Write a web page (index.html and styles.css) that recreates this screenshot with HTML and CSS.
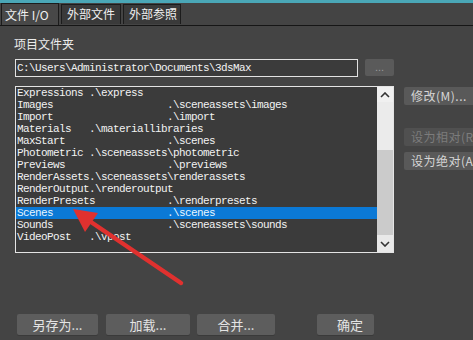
FILE: index.html
```html
<!DOCTYPE html>
<html>
<head>
<meta charset="utf-8">
<link rel="stylesheet" href="styles.css">
</head>
<body>
<div class="page">
  <div class="topstrip"></div>
  <div class="tabs">
    <div class="tab active">文件 I/O</div>
    <div class="tab">外部文件</div>
    <div class="tab">外部参照</div>
  </div>
  <div class="content">
    <div class="label">项目文件夹</div>
    <div class="pathrow">
      <div class="pathbox">C:\Users\Administrator\Documents\3dsMax</div>
      <div class="browse">...</div>
    </div>
    <div class="mainrow">
      <div class="listbox">
        <div class="rows">
<div class="row">Expressions .\express</div>
<div class="row">Images                   .\sceneassets\images</div>
<div class="row">Import                   .\import</div>
<div class="row">Materials   .\materiallibraries</div>
<div class="row">MaxStart                 .\scenes</div>
<div class="row">Photometric .\sceneassets\photometric</div>
<div class="row">Previews                 .\previews</div>
<div class="row">RenderAssets.\sceneassets\renderassets</div>
<div class="row">RenderOutput.\renderoutput</div>
<div class="row">RenderPresets            .\renderpresets</div>
<div class="row selected">Scenes                   .\scenes</div>
<div class="row">Sounds                   .\sceneassets\sounds</div>
<div class="row">VideoPost   .\vpost</div>
        </div>
        <div class="scrollbar">
          <div class="sbtn">
            <svg width="10" height="6" viewBox="0 0 10 6"><path d="M1 5 L5 1 L9 5" fill="none" stroke="#333" stroke-width="1.6"/></svg>
          </div>
          <div class="track"></div>
          <div class="thumb"></div>
          <div class="sbtn down">
            <svg width="10" height="6" viewBox="0 0 10 6"><path d="M1 1 L5 5 L9 1" fill="none" stroke="#333" stroke-width="1.6"/></svg>
          </div>
        </div>
      </div>
      <div class="sidebtns">
        <div class="sbutton">修改(M)...</div>
        <div class="sbutton disabled">设为相对(R)</div>
        <div class="sbutton">设为绝对(A)</div>
      </div>
    </div>
    <div class="bottomrow">
      <div class="btn b1">另存为...</div>
      <div class="btn b2">加载...</div>
      <div class="btn b3">合并...</div>
      <div class="btn b4">确定</div>
    </div>
  </div>
  <svg class="arrow" width="473" height="340" viewBox="0 0 473 340">
    <line x1="181" y1="283" x2="88" y2="220" stroke="#e0312f" stroke-width="4.5" stroke-linecap="round"/>
    <polygon points="73,209 98,213 85,232" fill="#e0312f"/>
  </svg>
</div>
</body>
</html>
```
FILE: styles.css
```css
html, body {
  margin: 0;
  padding: 0;
  background: #444444;
}
.page {
  position: relative;
  width: 473px;
  height: 340px;
  overflow: hidden;
  background: #444444;
  font-family: "Noto Sans CJK SC", "Liberation Sans", sans-serif;
  color: #ececec;
}
.topstrip {
  height: 3px;
  background: #4aa7b7;
}
.tabs {
  display: flex;
  gap: 2px;
  height: 22px;
  padding-left: 1px;
  border-bottom: 1px solid #161616;
  box-sizing: content-box;
}
.tab {
  box-sizing: border-box;
  flex-shrink: 0;
  height: 20px;
  margin-top: 1px;
  padding: 0 0 0 5px;
  font-size: 12px;
  line-height: 18px;
  background: #3a3a3a;
  border: 1px solid #1c1c1c;
  border-bottom: none;
  color: #f0f0f0;
  white-space: nowrap;
}
.tab.active {
  height: 22px;
  margin-top: 0;
  background: #484848;
  line-height: 21px;
  width: 58px;
  padding-left: 3px;
}
.tab:nth-child(2) { width: 60px; }
.tab:nth-child(3) { width: 58px; }
.content {
  padding-left: 15px;
}
.label {
  margin-top: 10px;
  margin-left: -1px;
  font-size: 12px;
  line-height: 16px;
  color: #ececec;
}
.pathrow {
  display: flex;
  align-items: flex-start;
  gap: 7px;
  margin-top: 7px;
}
.pathbox {
  box-sizing: border-box;
  flex-shrink: 0;
  width: 343px;
  height: 18px;
  border: 1px solid #e2e2e2;
  background: #3b3b3b;
  font-family: "Liberation Mono", monospace;
  font-size: 11px;
  letter-spacing: -0.6px;
  line-height: 16px;
  padding-left: 1px;
  color: #f2f2f2;
  white-space: pre;
}
.browse {
  box-sizing: border-box;
  flex-shrink: 0;
  width: 29px;
  height: 17px;
  background: #5a5a5a;
  border-radius: 2px;
  font-family: "Liberation Sans", sans-serif;
  font-size: 11px;
  line-height: 16px;
  text-align: center;
  color: #9a9a9a;
}
.mainrow {
  display: flex;
  align-items: flex-start;
  gap: 10px;
  margin-top: 9px;
}
.listbox {
  box-sizing: border-box;
  flex-shrink: 0;
  width: 379px;
  height: 167px;
  border: 1px solid #e4e4e4;
  background: #3b3b3b;
  display: flex;
}
.rows {
  flex: 1;
  padding-left: 1px;
  font-family: "Liberation Mono", monospace;
  font-size: 11px;
  letter-spacing: -0.6px;
  color: #f2f2f2;
}
.row {
  height: 12px;
  line-height: 12px;
  white-space: pre;
}
.row.selected {
  background: #0b79d6;
  margin-left: -1px;
  padding-left: 1px;
  color: #e8f6ff;
}
.scrollbar {
  width: 16px;
  flex-shrink: 0;
  display: flex;
  flex-direction: column;
  background: #ececec;
}
.sbtn {
  height: 15px;
  display: flex;
  align-items: center;
  justify-content: center;
  background: #f0f0f0;
}
.sbtn.down {
  height: 17px;
  background: #e9e9e9;
}
.track {
  height: 48px;
  background: #ebebeb;
}
.thumb {
  flex: 1;
  background: #cbcbcb;
}
.sidebtns {
  flex-shrink: 0;
  display: flex;
  flex-direction: column;
  padding-top: 1px;
}
.sbutton {
  box-sizing: border-box;
  width: 80px;
  height: 18px;
  background: #595959;
  border-radius: 2px;
  font-size: 12px;
  line-height: 18px;
  padding-left: 7px;
  color: #d6d6d6;
  white-space: nowrap;
  letter-spacing: 0.5px;
}
.sbutton.disabled {
  margin-top: 23px;
  background: #505050;
  color: #7c7c7c;
}
.sbutton + .sbutton:not(.disabled) {
  margin-top: 6px;
}
.bottomrow {
  display: flex;
  margin-top: 61px;
  margin-left: 2px;
}
.btn {
  box-sizing: border-box;
  flex-shrink: 0;
  height: 21px;
  background: #5d5d5d;
  border-radius: 2px;
  box-shadow: 0 1px 0 #3a3a3a;
  font-size: 13px;
  line-height: 21px;
  text-align: center;
  color: #e4e4e4;
}
.b1 { width: 81px; }
.b2 { width: 84px; margin-left: 8px; }
.b3 { width: 78px; margin-left: 7px; }
.b4 { width: 57px; margin-left: 42px; padding-left: 20px; text-align: left; }
.arrow {
  position: absolute;
  left: 0;
  top: 0;
  pointer-events: none;
}
```
